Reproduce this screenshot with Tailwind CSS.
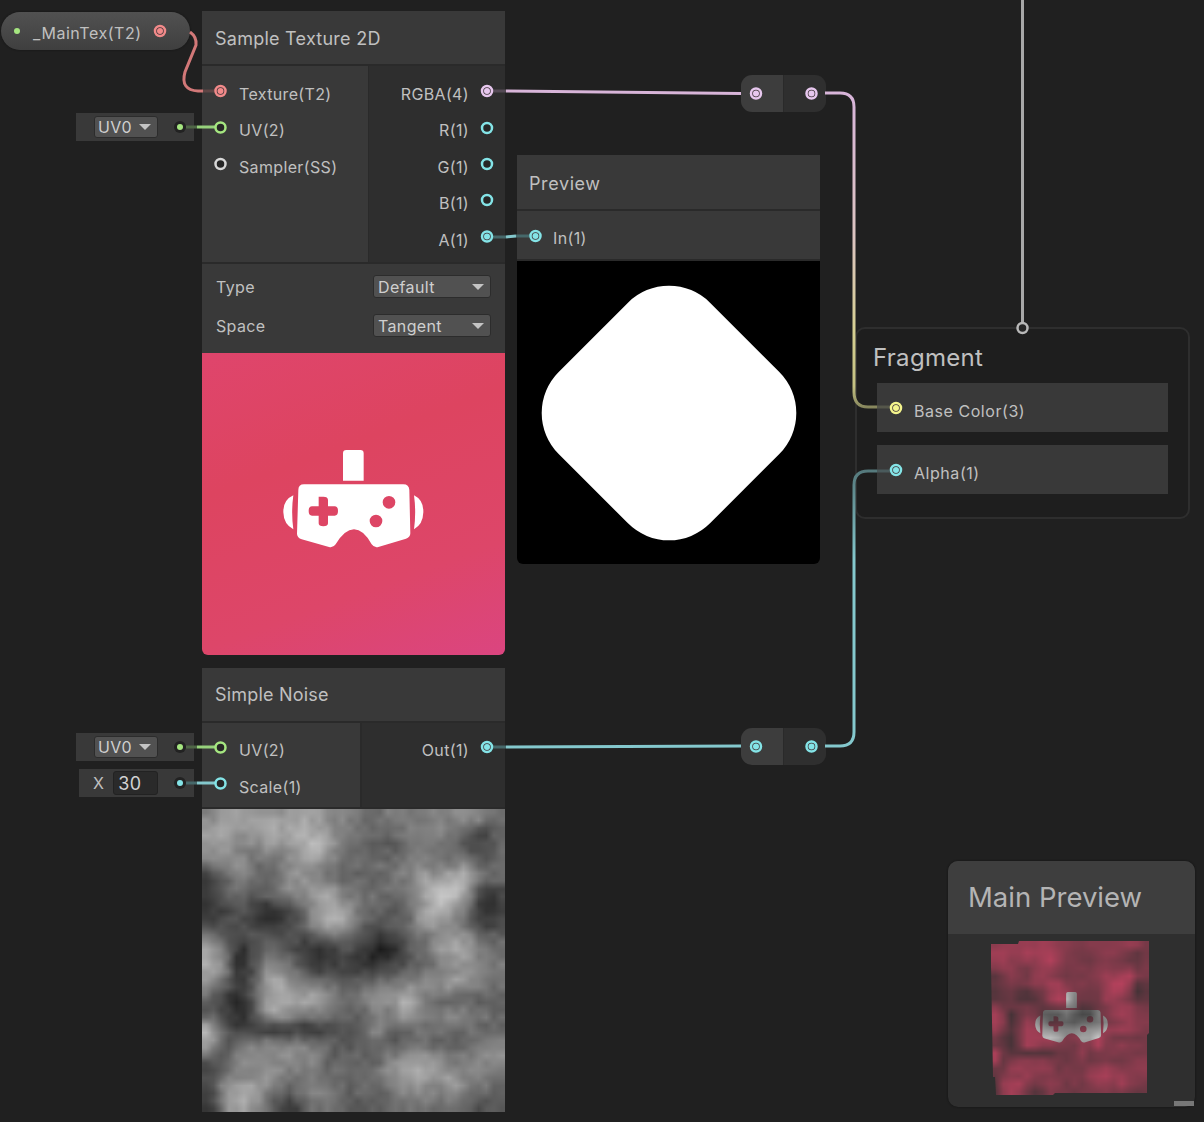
<!DOCTYPE html>
<html lang="en">
<head>
    <meta charset="UTF-8">
    <title>Shader Graph</title>
    <script src="https://cdn.jsdelivr.net/npm/@tailwindcss/browser@4"></script>
</head>
<body class="bg-[#202020]">
<div class="relative w-[1204px] h-[1122px] overflow-hidden font-['Inter','Noto_Sans',sans-serif] text-[16px] text-[#c0c0c0] tracking-[0.35px]">

    <!-- property pill -->
    <div class="absolute left-[1px] top-[12px] w-[189px] h-[38px] rounded-full bg-linear-to-b from-[#515151] to-[#3f3f3f] shadow-[0_0_2px_#111] flex items-center pl-[32px]">
        <span class="mt-[4px] leading-none tracking-[0.55px]">_MainTex(T2)</span>
    </div>

    <!-- inline inputs -->
    <div class="absolute left-[76px] top-[113px] w-[118px] h-[28px] bg-[#393939] pl-[18px] flex items-center">
        <div class="w-[64px] h-[22px] bg-[#515151] rounded-[3px] border border-[#2c2c2c] flex items-center justify-between pl-[3px] pr-[6px] text-[#cfcfcf]">
            <span class="leading-none">UV0</span><span class="border-x-[6px] border-x-transparent border-t-[6px] border-t-[#c4c4c4]"></span>
        </div>
    </div>
    <div class="absolute left-[76px] top-[733px] w-[118px] h-[28px] bg-[#393939] pl-[18px] flex items-center">
        <div class="w-[64px] h-[22px] bg-[#515151] rounded-[3px] border border-[#2c2c2c] flex items-center justify-between pl-[3px] pr-[6px] text-[#cfcfcf]">
            <span class="leading-none">UV0</span><span class="border-x-[6px] border-x-transparent border-t-[6px] border-t-[#c4c4c4]"></span>
        </div>
    </div>
    <div class="absolute left-[79px] top-[769px] w-[115px] h-[28px] bg-[#393939] pl-[14px] flex items-center gap-[9px]">
        <span class="leading-none">X</span>
        <div class="w-[45px] h-[24px] bg-[#2a2a2a] rounded-[3px] border border-[#222] pl-[4px] flex items-center text-[18px] text-[#d2d2d2]">30</div>
    </div>

    <!-- Sample Texture 2D -->
    <div class="absolute left-[202px] top-[11px] w-[303px] flex flex-col">
        <div class="h-[55px] bg-[#393939] border-b-2 border-[#2a2a2a] pl-[13px] pt-[2px] flex items-center text-[18px] tracking-[0.25px]">Sample Texture 2D</div>
        <div class="h-[196px] flex">
            <div class="w-[166px] bg-[#393939] pl-[37px] pt-[17.5px] flex flex-col gap-[15px] leading-[21.5px]">
                <span>Texture(T2)</span>
                <span>UV(2)</span>
                <span>Sampler(SS)</span>
            </div>
            <div class="flex-1 bg-[#2e2e2e] border-l border-[#2a2a2a] pr-[36px] pt-[17.5px] flex flex-col items-end gap-[15px] leading-[21.5px]">
                <span>RGBA(4)</span>
                <span>R(1)</span>
                <span>G(1)</span>
                <span>B(1)</span>
                <span>A(1)</span>
            </div>
        </div>
        <div class="h-[91px] bg-[#393939] border-t-2 border-[#2a2a2a] px-[14px] pt-[11px] flex flex-col gap-[16px]">
            <div class="h-[23px] flex items-center justify-between">
                <span>Type</span>
                <div class="w-[118px] h-[23px] bg-[#515151] rounded-[3px] border border-[#2c2c2c] flex items-center justify-between pl-[4px] pr-[6px] text-[#cfcfcf]">
                    <span class="leading-none">Default</span><span class="border-x-[6px] border-x-transparent border-t-[6px] border-t-[#c4c4c4]"></span>
                </div>
            </div>
            <div class="h-[23px] flex items-center justify-between">
                <span>Space</span>
                <div class="w-[118px] h-[23px] bg-[#515151] rounded-[3px] border border-[#2c2c2c] flex items-center justify-between pl-[4px] pr-[6px] text-[#cfcfcf]">
                    <span class="leading-none">Tangent</span><span class="border-x-[6px] border-x-transparent border-t-[6px] border-t-[#c4c4c4]"></span>
                </div>
            </div>
        </div>
        <div class="h-[302px] rounded-b-[6px] bg-[linear-gradient(160deg,#df456c_0%,#dd4460_35%,#dd4669_72%,#db4580_100%)] flex items-center justify-center">
            <svg class="w-[240px] h-[150px] mb-[18px] mr-[7px]" viewBox="0 0 720 450">
                <path id="vr" fill="#fff" fill-rule="evenodd" d="M349 90H391Q401 90 401 100V182H339V100Q339 90 349 90ZM222 193H520Q537 193 538 210L541 340Q541 352 528 356L445 381Q432 384 425 373Q400 328 372 328Q344 328 317 373Q310 384 297 381L215 358Q202 354 201 342L205 210Q205 193 222 193ZM266 230V259H246Q236 259 236 273Q236 287 246 287H266V310Q266 319 280 319Q294 319 294 310V287H314Q324 287 324 273Q324 259 314 259H294V240Q294 230 280 230Q266 230 266 230ZM477 228A19 19 0 1 0 477 266A19 19 0 1 0 477 228ZM438 284A19 19 0 1 0 438 322A19 19 0 1 0 438 284ZM190 226Q159 240 160 277Q161 313 190 328Q183 277 190 226ZM552 226Q581 240 580 277Q579 313 552 328Q559 277 552 226Z"/>
            </svg>
        </div>
    </div>

    <!-- Preview -->
    <div class="absolute left-[517px] top-[155px] w-[303px] flex flex-col">
        <div class="h-[56px] bg-[#393939] border-b-2 border-[#2a2a2a] pl-[12px] pt-[2px] flex items-center text-[18px] tracking-[0.6px]">Preview</div>
        <div class="h-[50px] bg-[#393939] border-b-2 border-[#2a2a2a] pl-[36px] pt-[17px] leading-[21.5px]">In(1)</div>
        <div class="h-[303px] bg-black rounded-b-[6px] flex items-center justify-center">
            <div class="w-[214px] h-[214px] bg-white rounded-[58px] rotate-45"></div>
        </div>
    </div>

    <!-- redirect nodes -->
    <div class="absolute left-[741px] top-[75px] w-[85px] h-[37px] rounded-[11px] overflow-hidden flex">
        <div class="w-[42px] bg-[#3d3d3d]"></div>
        <div class="flex-1 bg-[#2f2f2f] border-l border-[#2a2a2a]"></div>
    </div>
    <div class="absolute left-[741px] top-[728px] w-[85px] h-[37px] rounded-[11px] overflow-hidden flex">
        <div class="w-[42px] bg-[#3d3d3d]"></div>
        <div class="flex-1 bg-[#2f2f2f] border-l border-[#2a2a2a]"></div>
    </div>

    <!-- Fragment block -->
    <div class="absolute left-[855px] top-[327px] w-[335px] h-[192px] rounded-[10px] border-2 border-[#2e2e2e] bg-[#1e1e1e] flex flex-col pl-[20px]">
        <div class="h-[54px] -ml-[4px] flex items-center text-[24px] tracking-[0.3px] leading-none pt-[4px]">Fragment</div>
        <div class="w-[291px] h-[49px] bg-[#393939] pl-[37px] pt-[18px] leading-[21.5px] tracking-[0.55px]">Base Color(3)</div>
        <div class="w-[291px] h-[49px] mt-[13px] bg-[#393939] pl-[37px] pt-[18px] leading-[21.5px] tracking-[0.55px]">Alpha(1)</div>
    </div>

    <!-- Simple Noise -->
    <div class="absolute left-[202px] top-[668px] w-[303px] flex flex-col">
        <div class="h-[55px] bg-[#393939] border-b-2 border-[#2a2a2a] pl-[13px] flex items-center text-[18px] tracking-[0.2px]">Simple Noise</div>
        <div class="h-[86px] flex border-b-2 border-[#2a2a2a]">
            <div class="w-[158px] bg-[#393939] pl-[37px] pt-[17px] flex flex-col gap-[15.5px] leading-[21.5px]">
                <span>UV(2)</span>
                <span>Scale(1)</span>
            </div>
            <div class="flex-1 bg-[#2e2e2e] border-l-2 border-[#2a2a2a] pr-[36px] pt-[17px] text-right leading-[21.5px]">Out(1)</div>
        </div>
        <canvas id="noise" width="40" height="40" class="w-[303px] h-[303px] block"></canvas>
    </div>

    <!-- Main Preview -->
    <div class="absolute left-[948px] top-[861px] w-[247px] h-[246px] rounded-[10px] bg-[#2f2f2f] shadow-[0_0_2px_#111] flex flex-col">
        <div class="h-[73px] rounded-t-[10px] bg-[#3e3e3e] pl-[20px] flex items-center text-[27.5px] text-[#b4b4b4] tracking-normal">Main Preview</div>
        <div class="relative flex-1 pl-[43px] pt-[7px]">
            <canvas id="preview" width="160" height="155" class="block"></canvas>
            <div class="absolute right-[1px] bottom-[1px] w-[20px] h-[5px] bg-[#777]"></div>
        </div>
    </div>

    <!-- wires and ports -->
    <svg class="absolute inset-0 w-[1204px] h-[1122px] pointer-events-none" viewBox="0 0 1204 1122" fill="none">
        <defs>
            <linearGradient id="pinkYellow" gradientUnits="userSpaceOnUse" x1="0" y1="100" x2="0" y2="408">
                <stop offset="0" stop-color="#d8b5d9"/>
                <stop offset="0.45" stop-color="#dcc4c0"/>
                <stop offset="0.75" stop-color="#d6d092"/>
                <stop offset="0.93" stop-color="#c4c182"/>
                <stop offset="1" stop-color="#85855c"/>
            </linearGradient>
            <linearGradient id="tealFade" gradientUnits="userSpaceOnUse" x1="0" y1="470" x2="0" y2="560">
                <stop offset="0" stop-color="#55797c"/>
                <stop offset="1" stop-color="#84c8cd"/>
            </linearGradient>
        </defs>
        <g stroke-width="3" stroke-linecap="butt">
            <!-- _MainTex -->
            <path stroke="#d27878" d="M190 32Q197 37 196 45L185 72Q180 90 198 91H203"/>
            <path stroke="#5e4646" d="M203 91H215"/>
            <!-- UV0 -->
            <path stroke="#4f6646" d="M186 127H197"/>
            <path stroke="#97d27c" d="M197 127H215"/>
            <path stroke="#4f6646" d="M186 747H197"/>
            <path stroke="#97d27c" d="M197 747H215"/>
            <path stroke="#46686a" d="M186 783H197"/>
            <path stroke="#84c8cd" d="M197 783H215"/>
            <!-- RGBA -->
            <path stroke="#544a55" d="M493 91H506"/>
            <path stroke="#d8b5d9" d="M506 91L741 93.5"/>
            <path stroke="url(#pinkYellow)" d="M825 93H840Q854 93 854 107V392Q854 407 868 407H877"/>
            <path stroke="#55564a" d="M877 407H890"/>
            <!-- A to In -->
            <path stroke="#46686a" d="M493 237H506"/>
            <path stroke="#84c8cd" d="M506 237L516 236"/>
            <path stroke="#46686a" d="M516 236H530"/>
            <!-- Out -->
            <path stroke="#46686a" d="M493 747H506"/>
            <path stroke="#84c8cd" d="M506 747L741 746"/>
            <path stroke="url(#tealFade)" d="M825 746H840Q854 746 854 732V485Q854 471 868 471H877"/>
            <path stroke="#4a5a5c" d="M877 471H890"/>
        </g>
        <path stroke="#a8a8a8" stroke-width="3" d="M1022.5 0V322"/>

        <!-- input side stubs -->
        <circle cx="180" cy="127" r="6" fill="#222"/><circle cx="180" cy="127" r="3" fill="#a5e680"/>
        <circle cx="180" cy="747" r="6" fill="#222"/><circle cx="180" cy="747" r="3" fill="#a5e680"/>
        <circle cx="180" cy="783" r="6" fill="#222"/><circle cx="180" cy="783" r="3" fill="#84e4e7"/>
        <circle cx="17" cy="31" r="3" fill="#a5e680"/>

        <!-- empty ports -->
        <g stroke-width="2.500" fill="#262626">
            <circle cx="220.500" cy="127.500" r="5" stroke="#a5e680"/>
            <circle cx="220.500" cy="164" r="5" stroke="#d8d8d8"/>
            <circle cx="487" cy="128" r="5" stroke="#84e4e7"/>
            <circle cx="487" cy="164" r="5" stroke="#84e4e7"/>
            <circle cx="487" cy="200" r="5" stroke="#84e4e7"/>
            <circle cx="220.500" cy="747.500" r="5" stroke="#a5e680"/>
            <circle cx="220.500" cy="783.500" r="5" stroke="#84e4e7"/>
            <circle cx="1022.500" cy="328" r="5" stroke="#b8b8b8"/>
        </g>

        <!-- connected ports -->
        <g stroke-width="2.500" fill="#40363a">
            <g stroke="#f28a8a"><circle cx="160" cy="31" r="5"/><circle cx="220.500" cy="91" r="5"/></g>
            <g stroke="#e7c7ee"><circle cx="487" cy="91" r="5"/><circle cx="756" cy="93.500" r="5"/><circle cx="811.500" cy="93.500" r="5"/></g>
            <g stroke="#84e4e7"><circle cx="487" cy="236.500" r="5"/><circle cx="535.500" cy="236" r="5"/><circle cx="756" cy="746.500" r="5"/><circle cx="811.500" cy="746.500" r="5"/><circle cx="487" cy="747" r="5"/><circle cx="896" cy="470" r="5"/></g>
            <circle cx="896" cy="408" r="5" stroke="#f4f48c"/>
        </g>
        <g>
            <g fill="#f28a8a"><circle cx="160" cy="31" r="3"/><circle cx="220.500" cy="91" r="3"/></g>
            <g fill="#e7c7ee"><circle cx="487" cy="91" r="3"/><circle cx="756" cy="93.500" r="3"/><circle cx="811.500" cy="93.500" r="3"/></g>
            <g fill="#84e4e7"><circle cx="487" cy="236.500" r="3"/><circle cx="535.500" cy="236" r="3"/><circle cx="756" cy="746.500" r="3"/><circle cx="811.500" cy="746.500" r="3"/><circle cx="487" cy="747" r="3"/><circle cx="896" cy="470" r="3"/></g>
            <circle cx="896" cy="408" r="3" fill="#f4f48c"/>
        </g>
    </svg>
</div>

<script>
    // brightness read off the noise preview, 20 x 20 cells
    const grid = [
        [135,150,155,150,155,150,165,155,135,130,115,110,125,125,125,130,135,150,140,105],
        [165,165,150,150,175,165,170,175,150,120,105,100,105,120,135,135,115,95,70,95],
        [150,160,130,135,150,140,165,190,150,115,110,95,90,110,120,110,100,80,75,100],
        [120,140,140,110,100,130,150,150,125,105,110,115,105,125,130,120,120,130,90,110],
        [60,95,130,115,95,140,150,130,110,95,105,100,115,130,160,150,170,185,120,105],
        [70,90,110,100,110,135,135,165,165,120,110,120,105,115,150,190,195,150,55,70],
        [55,75,85,60,50,80,100,145,165,150,110,100,95,100,150,180,170,120,30,60],
        [60,70,80,50,45,55,90,155,185,170,100,90,90,95,155,150,130,100,60,70],
        [130,90,85,90,100,85,70,85,100,105,85,50,60,85,110,140,155,150,110,100],
        [170,120,30,80,110,100,60,50,50,80,50,30,35,90,110,145,165,150,120,115],
        [170,130,40,85,150,130,90,55,65,60,50,65,70,85,100,115,130,150,125,125],
        [150,100,55,100,165,160,130,120,105,100,100,115,120,130,150,150,160,150,130,110],
        [100,60,35,100,165,165,165,170,150,110,125,140,140,185,130,100,95,100,90,100],
        [90,70,35,90,170,155,130,130,110,105,95,130,125,180,120,120,140,120,120,105],
        [180,90,60,60,50,55,50,55,85,85,100,140,95,110,110,120,110,110,100,105],
        [170,80,110,130,135,125,130,110,100,85,100,115,90,100,110,95,95,110,130,130],
        [90,90,145,155,140,140,145,135,90,110,100,100,130,140,160,140,120,125,135,140],
        [75,115,135,130,155,125,115,120,110,110,110,110,150,165,175,150,155,130,120,125],
        [60,150,165,175,125,100,115,135,125,90,115,95,120,145,140,130,165,130,115,100],
        [50,135,170,145,95,55,75,120,105,100,85,100,105,110,120,105,115,95,80,85]
    ];

    function noiseAt(u, v) {
        const x = Math.min(18.999, Math.max(0, u * 20 - 0.5));
        const y = Math.min(18.999, Math.max(0, v * 20 - 0.5));
        const ix = Math.floor(x), iy = Math.floor(y);
        const fx = x - ix, fy = y - iy;
        const top = grid[iy][ix] * (1 - fx) + grid[iy][ix + 1] * fx;
        const bottom = grid[iy + 1][ix] * (1 - fx) + grid[iy + 1][ix + 1] * fx;
        return top * (1 - fy) + bottom * fy;
    }

    // fixed jitter so the noise isn't too smooth
    function jitter(x, y) {
        const n = Math.sin(x * 127.1 + y * 311.7) * 43758.5453;
        return (n - Math.floor(n) - 0.5) * 24;
    }

    const noise = document.getElementById('noise').getContext('2d');
    for (let y = 0; y < 40; y++) {
        for (let x = 0; x < 40; x++) {
            const g = Math.round(noiseAt((x + 0.5) / 40, (y + 0.5) / 40) + jitter(x, y));
            noise.fillStyle = `rgb(${g},${g},${g})`;
            noise.fillRect(x, y, 1, 1);
        }
    }

    // main preview: texture blended over the panel with the noise as alpha
    const canvas = document.getElementById('preview');
    const ctx = canvas.getContext('2d');
    const w = canvas.width, h = canvas.height;
    const outline = [[0,3],[27,3],[28,0],[158,0],[158,92],[156,94],[156,152],[64,152],[62,154],[5,154],[4,136],[2,136],[0,25]];
    ctx.beginPath();
    outline.forEach(([x, y], i) => i ? ctx.lineTo(x, y) : ctx.moveTo(x, y));
    ctx.closePath();
    ctx.clip();
    ctx.fillStyle = '#dd4669';
    ctx.fillRect(0, 0, w, h);
    ctx.fillStyle = '#fff';
    ctx.translate(w / 2 - 63.5, h / 2 - 42);
    ctx.scale(0.173, 0.173);
    ctx.fill(new Path2D(document.getElementById('vr').getAttribute('d')), 'evenodd');
    ctx.setTransform(1, 0, 0, 1, 0, 0);

    const img = ctx.getImageData(0, 0, w, h);
    for (let y = 0; y < h; y++) {
        for (let x = 0; x < w; x++) {
            const p = (y * w + x) * 4;
            if (img.data[p + 3] === 0) continue;
            const a = noiseAt(x / 158, y / 154) / 255;
            for (let c = 0; c < 3; c++) {
                img.data[p + c] = img.data[p + c] * a + 48 * (1 - a);
            }
        }
    }
    ctx.putImageData(img, 0, 0);
</script>
</body>
</html>
